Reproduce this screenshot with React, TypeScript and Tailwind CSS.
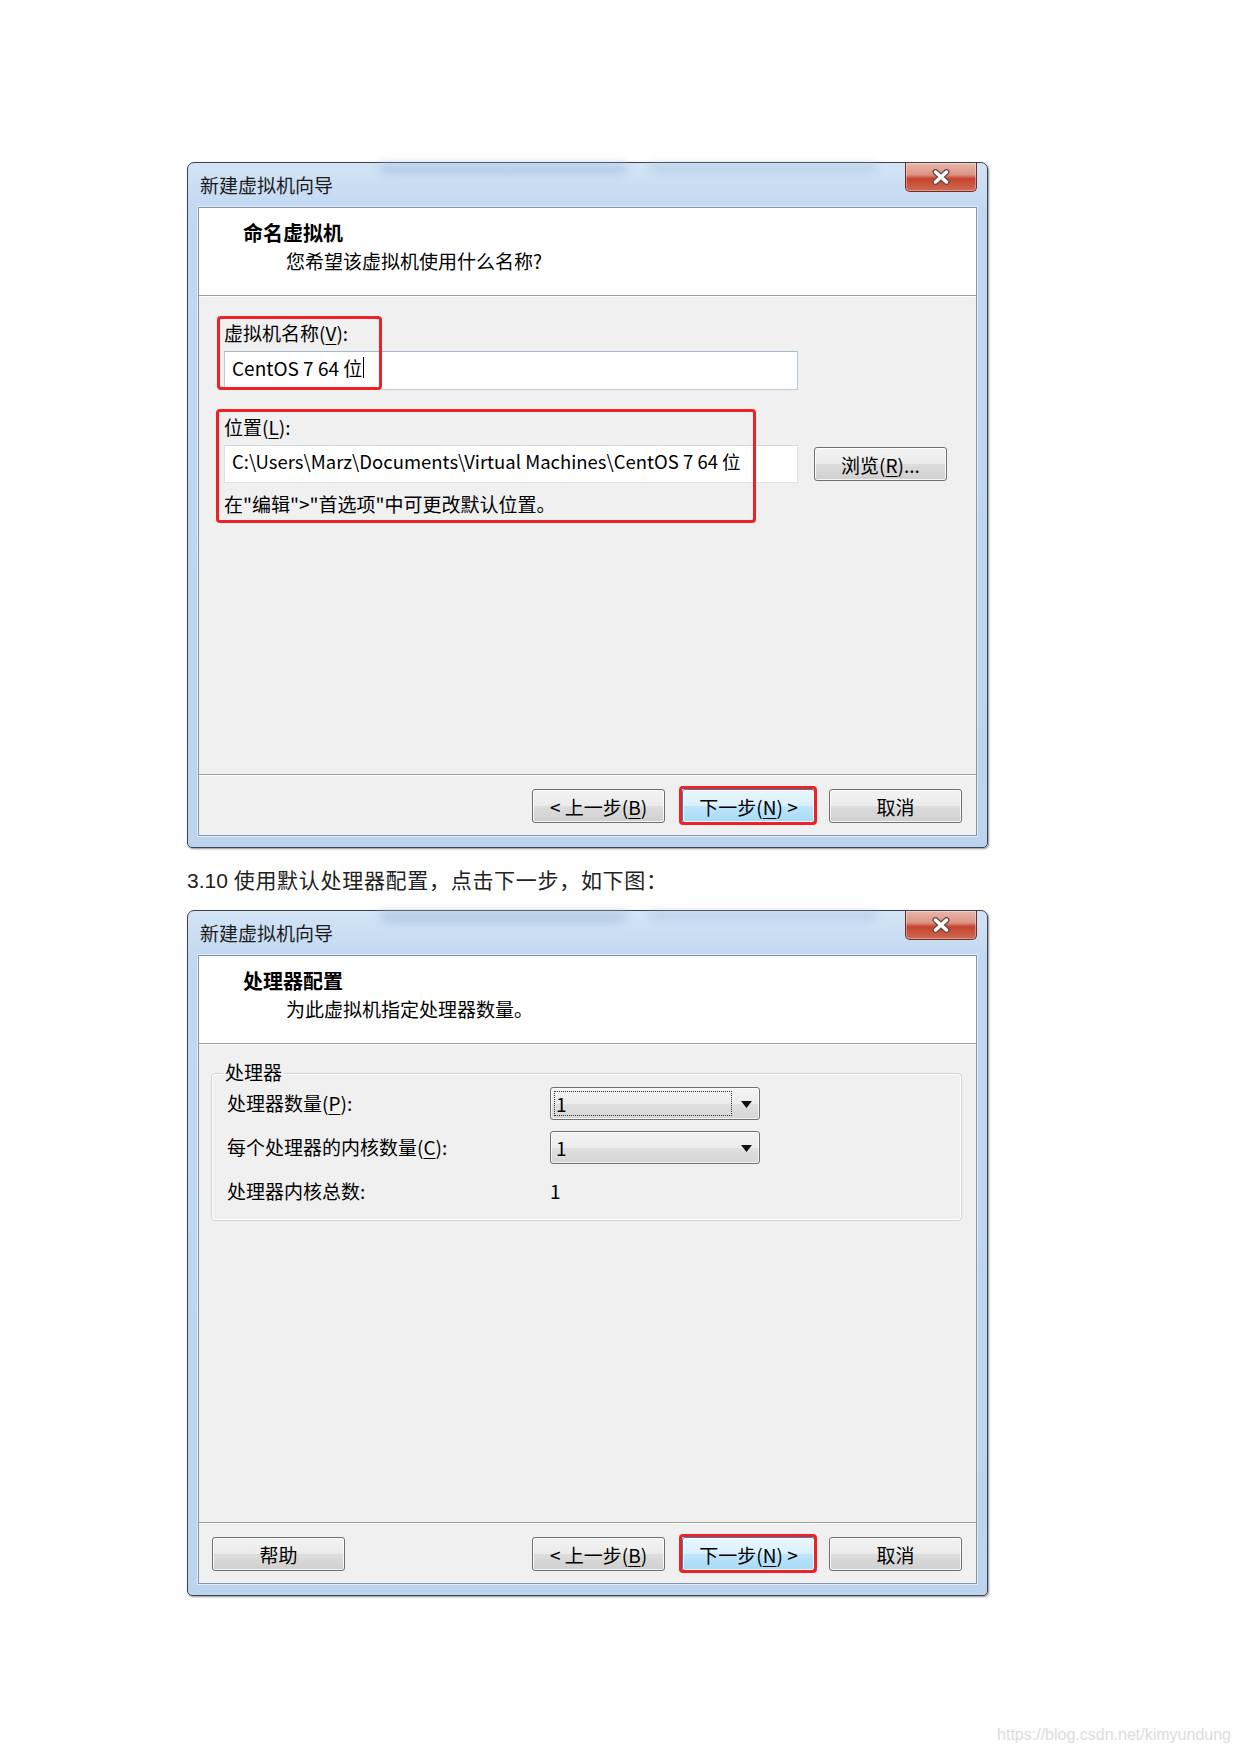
import React from "react";

const CJK = "font-['Noto_Sans_CJK_SC',sans-serif]";

function U({ c }: { c: string }) {
  return <span className="underline decoration-1 underline-offset-[3px]">{c}</span>;
}

function CloseBtn() {
  return (
    <div className="absolute right-[10px] top-0 flex h-[29px] w-[72px] items-center justify-center rounded-b-[5px] border border-t-0 border-[#6b2e25] bg-[linear-gradient(to_bottom,#e9b7ab_0%,#dc9383_42%,#c5432f_56%,#cf6a52_100%)] shadow-[inset_0_0_0_1px_rgba(255,255,255,0.35)]">
      <svg width="20" height="16" viewBox="0 0 20 16">
        <path d="M4.5 3 L15.5 13 M15.5 3 L4.5 13" stroke="#6a4a45" strokeWidth="6" strokeLinecap="round" />
        <path d="M4.5 3 L15.5 13 M15.5 3 L4.5 13" stroke="#ffffff" strokeWidth="3.4" strokeLinecap="round" />
      </svg>
    </div>
  );
}

function Btn({ children, w = 133, primary = false }: { children: React.ReactNode; w?: number; primary?: boolean }) {
  return (
    <div
      className={
        "flex h-[34px] items-center justify-center rounded-[3px] border text-[19px] leading-none text-black shadow-[inset_0_0_0_1px_rgba(255,255,255,0.8)] " +
        (primary
          ? "border-[#3c7fb1] bg-[linear-gradient(to_bottom,#eaf6fd_0%,#d9f0fc_50%,#bee6fd_51%,#a7d9f5_100%)]"
          : "border-[#707070] bg-[linear-gradient(to_bottom,#f2f2f2_0%,#ebebeb_50%,#dddddd_51%,#cfcfcf_100%)]")
      }
      style={{ width: w }}
    >
      {children}
    </div>
  );
}

function RedBox({ className }: { className: string }) {
  return <div className={"pointer-events-none absolute rounded-[4px] border-[3px] border-[#ec2227] " + className} />;
}

function Combo({ focus = false }: { focus?: boolean }) {
  return (
    <div className="relative flex h-[33px] w-[210px] items-center rounded-[3px] border border-[#707070] bg-[linear-gradient(to_bottom,#f4f4f4_0%,#ececec_50%,#e0e0e0_51%,#d6d6d6_100%)] shadow-[inset_0_0_0_1px_rgba(255,255,255,0.7)]">
      {focus && <div className="absolute left-[3px] top-[3px] h-[25px] w-[178px] border border-dotted border-[#333]" />}
      <span className="pl-[5px] text-[19px] leading-none">1</span>
      <svg className="absolute right-[7px] top-[13px]" width="11" height="7" viewBox="0 0 11 7">
        <path d="M0 0 H11 L5.5 7 Z" fill="#111" />
      </svg>
    </div>
  );
}

function Window({
  heading,
  sub,
  body,
  help = false,
}: {
  heading: string;
  sub: string;
  body: React.ReactNode;
  help?: boolean;
}) {
  return (
    <div className={"relative flex h-[686px] w-[801px] flex-col rounded-t-[7px] rounded-b-[5px] border border-[#3a4352] bg-[linear-gradient(to_bottom,#d3e4f6_0%,#c2d8f1_7%,#bcd4ee_100%)] px-[10px] shadow-[1px_1px_2px_rgba(0,0,0,0.45)] " + CJK}>
      <div className="pointer-events-none absolute left-[190px] top-0 h-[12px] w-[250px] rounded-b-full bg-[#9db7d8] opacity-50 blur-[5px]" />
      <div className="pointer-events-none absolute left-[460px] top-0 h-[10px] w-[230px] rounded-b-full bg-[#9db7d8] opacity-40 blur-[5px]" />
      <div className="relative flex h-[44px] shrink-0 items-center pl-[2px] text-[19px] text-[#1b1b1b]">新建虚拟机向导</div>
      <CloseBtn />
      <div className="flex h-[629px] shrink-0 flex-col border border-[#8193ad] bg-[#f0f0f0] text-black shadow-[0_0_0_1px_rgba(255,255,255,0.55)]">
        <div className="h-[88px] shrink-0 border-b border-[#a0a0a0] bg-white pl-[44px] pt-[12px]">
          <div className="text-[20px] font-bold leading-[26px]">{heading}</div>
          <div className="ml-[43px] mt-[2px] text-[19px] leading-[26px]">{sub}</div>
        </div>
        <div className="relative h-[478px] shrink-0 border-t border-white">{body}</div>
        <div className="flex-1 border-t border-[#a0a0a0]">
          <div className="flex h-full items-start border-t border-white pl-[13px] pr-[14px] pt-[13px]">
            {help && <Btn>帮助</Btn>}
            <div className="ml-auto flex">
              <Btn>
                &lt; 上一步(<U c="B" />)
              </Btn>
              <div className="relative ml-[17px]">
                <Btn primary>
                  下一步(<U c="N" />) &gt;
                </Btn>
                <RedBox className="-left-[3px] -top-[3px] -right-[2px] -bottom-[2px]" />
              </div>
              <div className="ml-[14px]">
                <Btn>取消</Btn>
              </div>
            </div>
          </div>
        </div>
      </div>
    </div>
  );
}

function Body1() {
  return (
    <div className="pl-[25px] pt-[24px] text-[19px]">
      <div className="leading-[24px]">
        虚拟机名称(<U c="V" />):
      </div>
      <div className="mt-[6px] flex h-[39px] w-[574px] items-center border border-[#bccbdc] border-t-[#a7b6c8] bg-white pb-[6px] pl-[7px] leading-none">
        CentOS 7 64 位<span className="ml-[1px] inline-block h-[21px] w-px bg-black" />
      </div>
      <div className="mt-[25px] leading-[24px]">
        位置(<U c="L" />):
      </div>
      <div className="mt-[6px] flex items-start">
        <div className="flex h-[38px] w-[574px] items-center border border-[#dfe4ea] border-t-[#d0d6dd] bg-white pb-[5px] pl-[7px] text-[18.5px] leading-none">
          C:\Users\Marz\Documents\Virtual Machines\CentOS 7 64 位
        </div>
        <div className="ml-[16px] mt-[2px]">
          <Btn>
            浏览(<U c="R" />)...
          </Btn>
        </div>
      </div>
      <div className="mt-[9px] leading-[24px]">在"编辑"&gt;"首选项"中可更改默认位置。</div>
      <RedBox className="left-[18px] top-[19px] h-[74px] w-[165px]" />
      <RedBox className="left-[17px] top-[112px] h-[114px] w-[540px]" />
    </div>
  );
}

function Body2() {
  return (
    <div className="pl-[12px] pr-[14px] pt-[28px] text-[19px]">
      <div className="relative h-[148px] rounded-[4px] border border-[#d5d5d5] shadow-[inset_0_0_0_1px_#ffffff]">
        <div className="absolute -top-[14px] left-[11px] bg-[#f0f0f0] px-[2px] leading-[24px]">处理器</div>
        <div className="grid grid-cols-[323px_210px] gap-y-[11px] pl-[15px] pt-[13px]">
          <div className="flex h-[33px] items-center">
            处理器数量(<U c="P" />):
          </div>
          <Combo focus />
          <div className="flex h-[33px] items-center">
            每个处理器的内核数量(<U c="C" />):
          </div>
          <Combo />
          <div className="flex h-[33px] items-center">处理器内核总数:</div>
          <div className="flex h-[33px] items-center">1</div>
        </div>
      </div>
    </div>
  );
}

export default function App() {
  return (
    <div className="relative h-[1753px] w-[1240px] overflow-hidden bg-white pl-[187px] pt-[162px]">
      <Window heading="命名虚拟机" sub="您希望该虚拟机使用什么名称?" body={<Body1 />} />
      <div className="mt-[19px] font-['Liberation_Sans','Noto_Sans_CJK_SC',sans-serif] text-[21px] leading-[28px] text-[#222]">
        3.10 <span className="tracking-[0.7px]">使用默认处理器配置，点击下一步，如下图：</span>
      </div>
      <div className="mt-[15px]">
        <Window heading="处理器配置" sub="为此虚拟机指定处理器数量。" body={<Body2 />} help />
      </div>
      <div className="absolute right-[9px] top-[1724px] font-['Liberation_Sans',sans-serif] text-[16px] leading-[22px] text-[#dcdcdc]">
        https://blog.csdn.net/kimyundung
      </div>
    </div>
  );
}
